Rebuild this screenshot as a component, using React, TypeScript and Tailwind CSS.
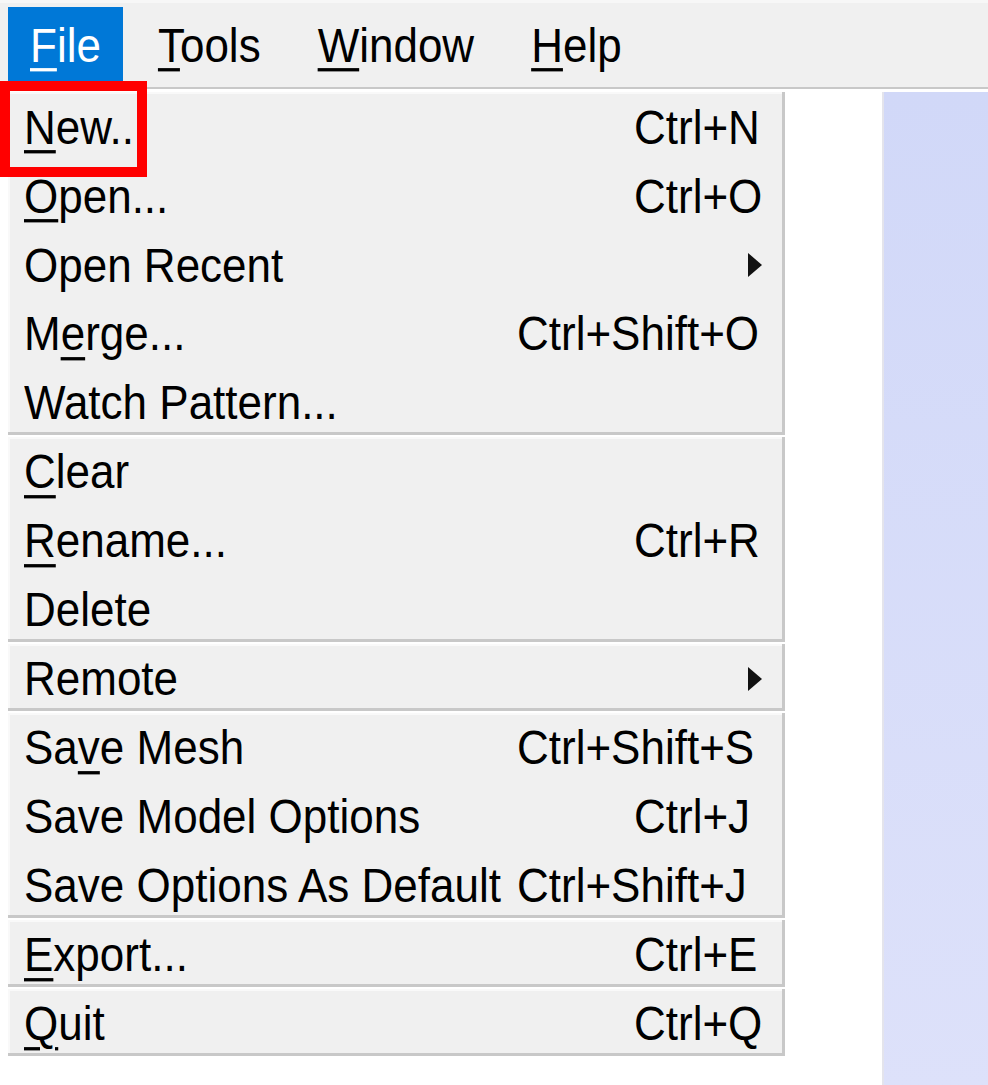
import React from "react";

type Item = {
  pre: string;
  mn?: string;
  post?: string;
  sc?: string;
  shift?: boolean;
  sub?: boolean;
};

const sections: Item[][] = [
  [
    { pre: "", mn: "N", post: "ew..", sc: "Ctrl+N" },
    { pre: "", mn: "O", post: "pen...", sc: "Ctrl+O" },
    { pre: "Open Recent", sub: true },
    { pre: "M", mn: "e", post: "rge...", sc: "Ctrl+Shift+O", shift: true },
    { pre: "Watch Pattern..." },
  ],
  [
    { pre: "", mn: "C", post: "lear" },
    { pre: "", mn: "R", post: "ename...", sc: "Ctrl+R" },
    { pre: "Delete" },
  ],
  [{ pre: "Remote", sub: true }],
  [
    { pre: "Sa", mn: "v", post: "e Mesh", sc: "Ctrl+Shift+S", shift: true },
    { pre: "Save Model Options", sc: "Ctrl+J" },
    { pre: "Save Options As Default", sc: "Ctrl+Shift+J", shift: true },
  ],
  [{ pre: "", mn: "E", post: "xport...", sc: "Ctrl+E" }],
  [{ pre: "", mn: "Q", post: "uit", sc: "Ctrl+Q" }],
];

function Mn({ c }: { c: string }) {
  return (
    <span className="underline decoration-[3px] underline-offset-[6px]">{c}</span>
  );
}

function Arrow() {
  return (
    <svg width="16" height="24" viewBox="0 0 16 24">
      <polygon points="1,1 15,12 1,23" fill="#111" />
    </svg>
  );
}

function Row({ it }: { it: Item }) {
  return (
    <div className="h-[69px] flex items-center pl-[16px] whitespace-nowrap">
      <div className="flex items-center scale-y-[1.1]">
        <div className="w-[493px] shrink-0">
          {it.pre}
          {it.mn && <Mn c={it.mn} />}
          {it.post}
        </div>
        {it.sc && <div className={it.shift ? "" : "pl-[117px]"}>{it.sc}</div>}
        {it.sub && (
          <div className="pl-[230px] flex items-center">
            <Arrow />
          </div>
        )}
      </div>
    </div>
  );
}

export default function App() {
  return (
    <div
      className="relative w-[988px] h-[1085px] bg-white flex flex-col overflow-hidden text-black text-[44px] leading-none"
      style={{ fontFamily: '"Liberation Sans", Arial, sans-serif' }}
    >
      {/* menubar */}
      <div className="h-[89px] shrink-0 bg-[#f0f0f0] border-t-[3px] border-[#f7f7f7] border-b-[2px] border-b-[#c8c8c8] flex items-start pl-[8px] gap-[13px]">
        <div className="mt-[4px] h-[75px] px-[22px] flex items-center bg-[#0078d7] text-white">
          <span className="scale-y-[1.1]">
            <Mn c="F" />
            ile
          </span>
        </div>
        <div className="mt-[4px] h-[75px] px-[22px] flex items-center">
          <span className="scale-y-[1.1]">
            <Mn c="T" />
            ools
          </span>
        </div>
        <div className="mt-[4px] h-[75px] px-[22px] flex items-center">
          <span className="scale-y-[1.1]">
            <Mn c="W" />
            indow
          </span>
        </div>
        <div className="mt-[4px] h-[75px] px-[22px] flex items-center">
          <span className="scale-y-[1.1]">
            <Mn c="H" />
            elp
          </span>
        </div>
      </div>
      <div className="h-[3px] shrink-0 bg-white" />
      {/* body */}
      <div className="flex flex-1 min-h-0">
        <div className="w-[785px] shrink-0 pl-[8px] flex flex-col">
          {sections.map((sec, i) => (
            <div
              key={i}
              className="flex flex-col bg-[#f0f0f0] shadow-[inset_0_-2px_0_#ffffff,inset_-3px_-5px_0_#c8c8c8,inset_2px_2px_0_#f9f9f9]"
            >
              {sec.map((it, j) => (
                <Row key={j} it={it} />
              ))}
            </div>
          ))}
        </div>
        <div className="w-[97px] shrink-0 bg-white" />
        <div className="flex-1 border-l-[2px] border-[#e4e4ec] bg-gradient-to-b from-[#d1d8f8] to-[#dde1fa]" />
      </div>
      {/* red annotation box */}
      <div className="absolute left-0 top-[81px] w-[147px] h-[96px] border-[10px] border-[#ff0000]" />
    </div>
  );
}
